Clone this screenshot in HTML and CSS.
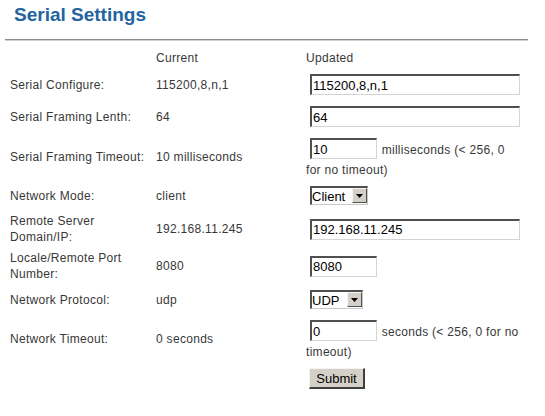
FILE: index.html
```html
<!DOCTYPE html>
<html lang="en">
<head>
<meta charset="utf-8">
<title>Serial Settings</title>
<link rel="stylesheet" href="styles.css">
</head>
<body>
<h1 class="title">Serial Settings</h1>
<div class="rule"></div>
<form class="settings">
  <div class="cell"></div>
  <div class="cell head">Current</div>
  <div class="cell head">Updated</div>

  <div class="cell label">Serial Configure:</div>
  <div class="cell value">115200,8,n,1</div>
  <div class="cell field"><input class="text wide" type="text" value="115200,8,n,1"></div>

  <div class="cell label">Serial Framing Lenth:</div>
  <div class="cell value">64</div>
  <div class="cell field"><input class="text wide" type="text" value="64"></div>

  <div class="cell label">Serial Framing Timeout:</div>
  <div class="cell value">10 milliseconds</div>
  <div class="cell field"><input class="text short" type="text" value="10"> milliseconds (&lt; 256, 0 for no timeout)</div>

  <div class="cell label">Network Mode:</div>
  <div class="cell value">client</div>
  <div class="cell field">
    <span class="select select-mode">
      <select><option>Client</option><option>Server</option></select>
      <span class="select-btn"><svg width="7" height="4" viewBox="0 0 7 4"><path d="M0 0h7L3.5 4z" fill="#000"/></svg></span>
    </span>
  </div>

  <div class="cell label">Remote Server Domain/IP:</div>
  <div class="cell value">192.168.11.245</div>
  <div class="cell field"><input class="text wide" type="text" value="192.168.11.245"></div>

  <div class="cell label">Locale/Remote Port Number:</div>
  <div class="cell value">8080</div>
  <div class="cell field"><input class="text short" type="text" value="8080"></div>

  <div class="cell label">Network Protocol:</div>
  <div class="cell value">udp</div>
  <div class="cell field">
    <span class="select select-proto">
      <select><option>UDP</option><option>TCP</option></select>
      <span class="select-btn"><svg width="7" height="4" viewBox="0 0 7 4"><path d="M0 0h7L3.5 4z" fill="#000"/></svg></span>
    </span>
  </div>

  <div class="cell label">Network Timeout:</div>
  <div class="cell value">0 seconds</div>
  <div class="cell field"><input class="text short" type="text" value="0"> seconds (&lt; 256, 0 for no timeout)</div>

  <div class="cell"></div>
  <div class="cell"></div>
  <div class="cell field"><button class="submit" type="button">Submit</button></div>
</form>
</body>
</html>
```

FILE: styles.css
```css
body {
  margin: 0;
  background: #ffffff;
  font-family: "Liberation Sans", Arial, sans-serif;
  font-size: 12px;
  color: #383838;
}

.title {
  margin: 0;
  padding: 4px 0 0 14px;
  font-size: 19px;
  line-height: 22px;
  font-weight: bold;
  color: #2364a0;
}

.rule {
  margin: 13px 0 0 5px;
  width: 523px;
  border-top: 1px solid #8c8c8c;
  border-bottom: 1px solid #d0d0d0;
}

.settings {
  display: grid;
  grid-template-columns: 146px 150px 215px;
  row-gap: 5px;
  align-items: center;
  margin: 9px 0 0 10px;
  line-height: 16px;
  letter-spacing: 0.3px;
}

.label {
  padding-right: 8px;
}

.text {
  display: block;
  box-sizing: border-box;
  height: 21px;
  margin: 3px 0 3px 4px;
  padding: 0 1px;
  font: 13px "Liberation Sans", Arial, sans-serif;
  letter-spacing: 0;
  color: #000000;
  background: #ffffff;
  border-style: solid;
  border-width: 2px 1px 1px 2px;
  border-color: #505050 #d4d4d4 #d4d4d4 #505050;
  border-radius: 0;
  outline: none;
}

.wide {
  width: 210px;
}

.short {
  display: inline-block;
  width: 67px;
  margin-right: 1px;
}

.select {
  position: relative;
  display: block;
  height: 19px;
  margin: 3px 0 3px 4px;
}

.select-mode {
  width: 58px;
}

.select-proto {
  width: 53px;
}

.select select {
  -webkit-appearance: none;
  appearance: none;
  display: block;
  box-sizing: border-box;
  width: 100%;
  height: 19px;
  margin: 0;
  padding: 0 16px 0 0;
  font: 13px "Liberation Sans", Arial, sans-serif;
  letter-spacing: 0;
  color: #000000;
  background: #ffffff;
  border-style: solid;
  border-width: 2px 1px 1px 2px;
  border-color: #505050 #c8c8c8 #c8c8c8 #505050;
  border-radius: 0;
  outline: none;
}

.select-btn {
  position: absolute;
  top: 2px;
  right: 1px;
  width: 15px;
  height: 15px;
  box-sizing: border-box;
  display: flex;
  align-items: center;
  justify-content: center;
  background: #d4d0c8;
  border-style: solid;
  border-width: 1px;
  border-color: #f4f4f4 #505050 #505050 #f4f4f4;
  pointer-events: none;
}

.select-btn svg {
  display: block;
}

.submit {
  display: block;
  box-sizing: border-box;
  width: 56px;
  height: 21px;
  margin: 3px 0 3px 3px;
  padding: 0;
  font: 13px "Liberation Sans", Arial, sans-serif;
  letter-spacing: 0;
  color: #000000;
  background: #d4d0c8;
  border-style: solid;
  border-width: 1px 2px 2px 1px;
  border-color: #f4f4f4 #404040 #404040 #f4f4f4;
  border-radius: 0;
}
```
